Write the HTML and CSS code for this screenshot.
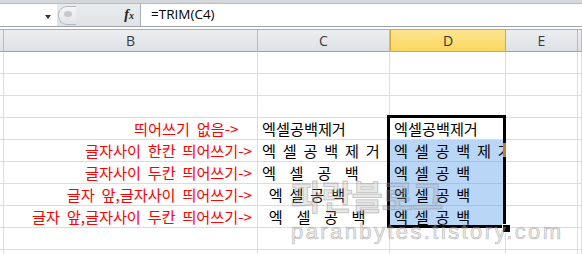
FILE: index.html
```html
<!DOCTYPE html>
<html>
<head>
  <title>TRIM</title>
  <link rel="stylesheet" href="styles.css">
</head>
<body>
  <div class="sheet">
    <div class="formula-bar">
      <div class="name-box"><span class="arrow"></span></div>
      <div class="fx-zone">
        <span class="grip"><span class="knob"></span></span>
        <span class="fx">f<span class="x">x</span></span>
      </div>
      <div class="formula">=TRIM(C4)</div>
    </div>

    <div class="grid">
      <div class="hd"></div><div class="hd">B</div><div class="hd">C</div><div class="hd hd-on">D</div><div class="hd">E</div><div class="hd"></div>

      <div class="c"></div><div class="c"></div><div class="c"></div><div class="c"></div><div class="c"></div><div class="c"></div>
      <div class="c"></div><div class="c"></div><div class="c"></div><div class="c"></div><div class="c"></div><div class="c"></div>
      <div class="c"></div><div class="c"></div><div class="c"></div><div class="c"></div><div class="c"></div><div class="c"></div>

      <div class="c"></div><div class="c label">띄어쓰기 없음-&gt;  </div><div class="c txt">엑셀공백제거</div><div class="c txt active">엑셀공백제거</div><div class="c"></div><div class="c"></div>
      <div class="c"></div><div class="c label">글자사이 한칸 띄어쓰기-&gt;</div><div class="c txt">엑 셀 공 백 제 거</div><div class="c txt sel">엑 셀 공 백 제 거</div><div class="c"></div><div class="c"></div>
      <div class="c"></div><div class="c label">글자사이 두칸 띄어쓰기-&gt;</div><div class="c txt">엑  셀  공  백</div><div class="c txt sel">엑 셀 공 백</div><div class="c"></div><div class="c"></div>
      <div class="c"></div><div class="c label">글자 앞,글자사이 띄어쓰기-&gt;</div><div class="c txt"> 엑 셀 공 백</div><div class="c txt sel">엑 셀 공 백</div><div class="c"></div><div class="c"></div>
      <div class="c"></div><div class="c label">글자 앞,글자사이 두칸 띄어쓰기-&gt;</div><div class="c txt"> 엑  셀  공  백</div><div class="c txt sel">엑 셀 공 백</div><div class="c"></div><div class="c"></div>

      <div class="c"></div><div class="c"></div><div class="c"></div><div class="c"></div><div class="c"></div><div class="c"></div>
      <div class="c"></div><div class="c"></div><div class="c"></div><div class="c"></div><div class="c"></div><div class="c"></div>
    </div>

    <!-- selection frame over D4:D8 -->
    <div class="sel-frame"></div>
    <div class="overflow-mark"></div>
    <div class="fill-handle"></div>

    <div class="watermark">
      <div class="wm-ko">파란블로그</div>
      <div class="wm-url">paranbytes.tistory.com</div>
    </div>
  </div>
</body>
</html>
```

FILE: styles.css
```css
body {
  margin: 0;
  background: #ffffff;
  overflow: hidden;
}
.sheet {
  position: relative;
  width: 582px;
  height: 254px;
  overflow: hidden;
  font-family: "Noto Sans CJK KR", sans-serif;
}

/* formula bar */
.formula-bar {
  display: flex;
  height: 23px;
  border-top: 3px solid #d3d7dc;
  border-bottom: 1px solid #9ea3aa;
  background: #ffffff;
}
.name-box {
  width: 57px;
  position: relative;
  border-top: 1px solid #b7bcc3;
}
.arrow {
  position: absolute;
  left: 45px;
  top: 11px;
  border-left: 3px solid transparent;
  border-right: 3px solid transparent;
  border-top: 4px solid #333;
}
.fx-zone {
  width: 84px;
  display: flex;
  align-items: center;
  justify-content: space-between;
  padding: 0 6px 0 1px;
  box-sizing: border-box;
  background: linear-gradient(#e9ecef, #dfe3e7);
  border-top: 1px solid #b7bcc3;
  border-right: 1px solid #a9aeb5;
}
.grip {
  width: 17px;
  height: 17px;
  border-radius: 9px 0 0 9px;
  border: 1px solid #b3b8bf;
  border-right: none;
  background: linear-gradient(#f4f5f7, #e1e4e8);
  position: relative;
}
.knob {
  position: absolute;
  left: 5px;
  top: 4px;
  width: 8px;
  height: 6px;
  border-radius: 50%;
  background: #c5c9ce;
}
.fx {
  font-family: "Liberation Serif", serif;
  font-style: italic;
  font-weight: bold;
  font-size: 14px;
  color: #222;
}
.fx .x {
  font-size: 10px;
}
.formula {
  flex: 1;
  border-top: 1px solid #b7bcc3;
  padding-left: 10px;
  font-family: "Open Sans", sans-serif;
  font-size: 13.5px;
  line-height: 21px;
  color: #000;
}

/* grid */
.grid {
  margin-top: 2px;
  display: grid;
  grid-template-columns: 4px 254px 132px 116px 72px 1fr;
  grid-auto-rows: 22px;
  border-top: 1px solid #a8adb4;
}
.hd {
  background: linear-gradient(#eceef1, #dde1e6);
  border-right: 1px solid #b6bbc2;
  border-bottom: 1px solid #9ea3aa;
  font-family: "Open Sans", sans-serif;
  font-size: 14px;
  color: #3b3b3b;
  text-align: center;
  line-height: 21px;
  box-sizing: border-box;
}
.hd-on {
  background: linear-gradient(#fde58f, #fbd660);
  border: 1px solid #d9a83d;
  border-top: none;
  color: #333;
}
.c {
  border-right: 1px solid #dadcdd;
  border-bottom: 1px solid #dadcdd;
  box-sizing: border-box;
  white-space: pre;
  overflow: hidden;
  font-size: 15.2px;
  line-height: 21px;
  word-spacing: 3.4px;
}
.label {
  color: #ff0000;
  text-align: right;
  padding-right: 5px;
}
.txt {
  color: #000;
  padding-left: 4px;
}
.active {
  background: #ffffff;
}
.sel {
  background: #b9d6f7;
  border-bottom-color: #a6c2e2;
}

/* overlays */
.sel-frame {
  position: absolute;
  left: 387px;
  top: 115px;
  width: 119px;
  height: 113px;
  border: 3px solid #000;
  box-sizing: border-box;
}
.overflow-mark {
  position: absolute;
  left: 503px;
  top: 143px;
  width: 3px;
  height: 14px;
  background: #c8792f;
}
.fill-handle {
  position: absolute;
  left: 502px;
  top: 224px;
  width: 7px;
  height: 7px;
  background: #000;
  border: 1px solid #fff;
}
.watermark {
  position: absolute;
  left: 291px;
  top: 176px;
  pointer-events: none;
}
.wm-ko {
  font-size: 34px;
  font-weight: bold;
  line-height: 40px;
  letter-spacing: -1px;
  color: rgba(170, 170, 170, 0.28);
  -webkit-text-stroke: 1px rgba(130, 130, 130, 0.4);
}
.wm-url {
  margin-top: 3px;
  font-family: "Liberation Sans", sans-serif;
  font-size: 22px;
  line-height: 26px;
  letter-spacing: 2.4px;
  color: rgba(200, 200, 200, 0.35);
  -webkit-text-stroke: 0.7px rgba(140, 140, 140, 0.55);
}
```
